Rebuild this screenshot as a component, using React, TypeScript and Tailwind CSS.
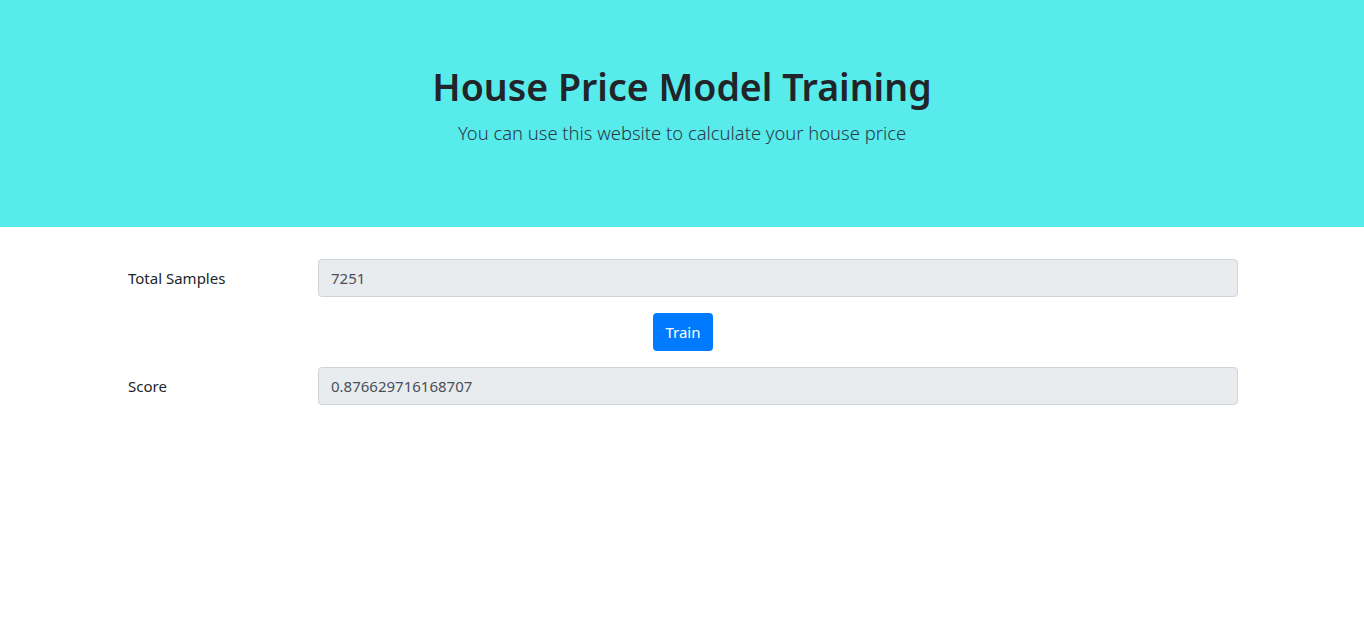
export default function App() {
  return (
    <div className="min-h-screen bg-white text-[#212529] font-['Noto_Sans',sans-serif]">
      <div className="h-[227px] bg-[#58ebeb] pt-[63px] text-center">
        <h1 className="text-[37.5px] font-semibold leading-[48px] mb-2">House Price Model Training</h1>
        <p className="text-[18.4px] font-light leading-[28px] text-[#2a3a48]">
          You can use this website to calculate your house price
        </p>
      </div>

      <div className="w-[1140px] mx-auto pl-4 pr-[14px] pt-8">
        <div className="flex items-center mb-4">
          <label className="w-[190px] text-[15px]">Total Samples</label>
          <div className="flex-1 h-[38px] rounded bg-[#e9ecef] border border-[#ced4da] px-3 flex items-center text-[15px] text-[#495057]">
            7251
          </div>
        </div>
        <div className="flex justify-center mb-4">
          <button className="h-[38px] px-3 rounded bg-[#007bff] text-white text-[15px]">Train</button>
        </div>
        <div className="flex items-center">
          <label className="w-[190px] text-[15px]">Score</label>
          <div className="flex-1 h-[38px] rounded bg-[#e9ecef] border border-[#ced4da] px-3 flex items-center text-[15px] text-[#495057]">
            0.876629716168707
          </div>
        </div>
      </div>
    </div>
  );
}
